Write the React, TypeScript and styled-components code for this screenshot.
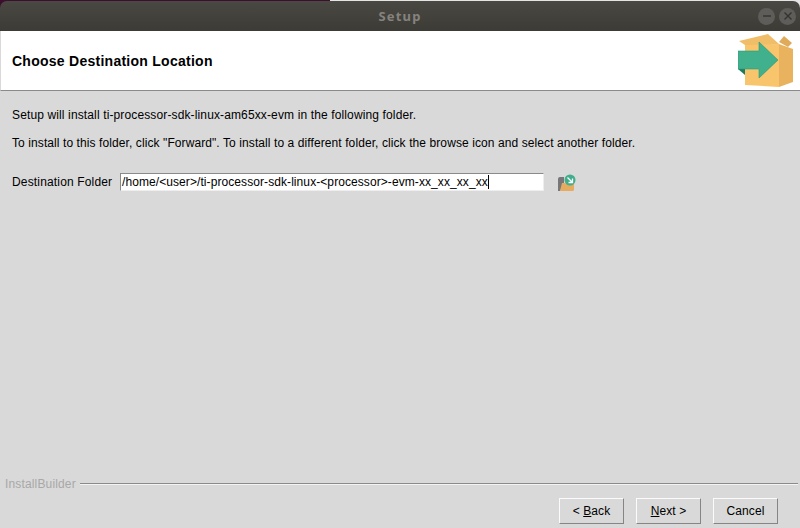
import React from 'react';
import styled, { createGlobalStyle } from 'styled-components';

const GlobalStyle = createGlobalStyle`
  html, body {
    margin: 0;
    padding: 0;
    width: 800px;
    height: 528px;
    overflow: hidden;
    background: #d9d9d9;
  }
  * {
    box-sizing: border-box;
  }
`;

const Page = styled.div`
  width: 800px;
  height: 528px;
  display: flex;
  flex-direction: column;
  font-family: 'Liberation Sans', Arial, sans-serif;
  font-size: 12px;
  color: #000;
  background: linear-gradient(to right, #3c0f2e 0, #3c0f2e 330px, #e4e4e4 330px) top / 100% 8px no-repeat;
`;

const TitleBar = styled.div`
  height: 30px;
  margin-top: 1px;
  flex: none;
  display: flex;
  align-items: center;
  justify-content: flex-end;
  gap: 4px;
  padding-right: 4px;
  position: relative;
  background: linear-gradient(#4a4843, #3d3b36);
  border-radius: 7px 7px 0 0;
`;

const WindowTitle = styled.div`
  position: absolute;
  left: 0;
  right: 0;
  top: 7px;
  text-align: center;
  font-family: 'Noto Sans', 'DejaVu Sans', sans-serif;
  font-weight: 700;
  font-size: 13px;
  line-height: 17px;
  letter-spacing: 1.2px;
  color: #85837f;
`;

const WindowButton = styled.div`
  width: 17px;
  height: 17px;
  border-radius: 50%;
  background: #5f5d59;
  display: flex;
  align-items: center;
  justify-content: center;
`;

const Header = styled.div`
  height: 60px;
  flex: none;
  background: #fff;
  border-bottom: 1px solid #8a8a8a;
  border-left: 1px solid #d9d9d9;
  display: flex;
  align-items: center;
  justify-content: space-between;
  padding: 0 6px 0 11px;
`;

const HeaderTitle = styled.div`
  font-weight: 700;
  font-size: 14px;
  letter-spacing: 0.26px;
`;

const Body = styled.div`
  flex: 1;
  background: #d9d9d9;
  display: flex;
  flex-direction: column;
  padding: 17px 12px 0;
`;

const Paragraph = styled.div<{ $track: number }>`
  line-height: 14px;
  margin-bottom: 14px;
  letter-spacing: ${(p) => p.$track}px;
`;

const FolderRow = styled.div`
  display: flex;
  align-items: center;
  margin-top: 9px;
  height: 18px;
`;

const FolderLabel = styled.div`
  width: 108px;
  flex: none;
  letter-spacing: 0.16px;
`;

const FolderField = styled.div`
  width: 424px;
  height: 18px;
  flex: none;
  background: #fff;
  border-top: 1px solid #8a8a8a;
  border-left: 1px solid #8a8a8a;
  border-right: 1px solid #eeeeee;
  border-bottom: 1px solid #eeeeee;
  padding-left: 1px;
  line-height: 16px;
  letter-spacing: 0.08px;
  white-space: nowrap;
  display: flex;
  align-items: center;
`;

const Caret = styled.span`
  display: inline-block;
  width: 1px;
  height: 14px;
  background: #000;
`;

const BrowseIcon = styled.svg`
  margin-left: 14px;
  flex: none;
`;

const Spacer = styled.div`
  flex: 1;
`;

const BrandRow = styled.div`
  display: flex;
  align-items: center;
  gap: 4px;
  margin: 0 -10px 0 -12px;
  padding-left: 5px;
  height: 14px;
`;

const Brand = styled.span`
  color: #a8a8a8;
  letter-spacing: 0.15px;
`;

const BrandRule = styled.div`
  flex: 1;
  height: 2px;
  border-top: 1px solid #8a8a8a;
  border-bottom: 1px solid #f4f4f4;
`;

const ButtonRow = styled.div`
  display: flex;
  justify-content: flex-end;
  gap: 12px;
  margin: 7px 10px 0 0;
  padding-bottom: 4px;
`;

const Button = styled.div<{ $width: number }>`
  width: ${(p) => p.$width}px;
  height: 26px;
  background: #d9d9d9;
  border-top: 1px solid #fbfbfb;
  border-left: 1px solid #fbfbfb;
  border-right: 1px solid #858585;
  border-bottom: 1px solid #858585;
  display: flex;
  align-items: center;
  justify-content: center;
  white-space: pre;
  letter-spacing: 0.1px;

  u {
    text-underline-offset: 1px;
  }
`;

export default function App() {
  return (
    <Page>
      <GlobalStyle />
      <TitleBar>
        <WindowTitle>Setup</WindowTitle>
        <WindowButton>
          <svg width="10" height="10" viewBox="0 0 10 10">
            <path d="M1 5h8" stroke="#35332f" strokeWidth="1.4" />
          </svg>
        </WindowButton>
        <WindowButton>
          <svg width="10" height="10" viewBox="0 0 10 10">
            <path d="M1.5 1.5l7 7M8.5 1.5l-7 7" stroke="#35332f" strokeWidth="1.4" />
          </svg>
        </WindowButton>
      </TitleBar>
      <Header>
        <HeaderTitle>Choose Destination Location</HeaderTitle>
        <svg width="56" height="55" viewBox="0 0 56 55">
          <path d="M1 8L30 1l11 10-31 3z" fill="#f0bd68" />
          <path d="M7 12l34-1v43L7 52z" fill="#f8c56d" />
          <path d="M41 11l14 5v33l-14 5z" fill="#e8b25f" />
          <path d="M41 9l5-6 8 7-4 4z" fill="#dfab5b" />
          <path d="M0 36h7v6z" fill="#1f7a5e" />
          <path d="M0 18h21V9l19 18-19 18v-9H0z" fill="#41b08c" stroke="#2b9a78" strokeWidth="0.6" />
        </svg>
      </Header>
      <Body>
        <Paragraph $track={0.13}>Setup will install ti-processor-sdk-linux-am65xx-evm in the following folder.</Paragraph>
        <Paragraph $track={0.09}>To install to this folder, click "Forward". To install to a different folder, click the browse icon and select another folder.</Paragraph>
        <FolderRow>
          <FolderLabel>Destination Folder</FolderLabel>
          <FolderField>
            /home/&lt;user&gt;/ti-processor-sdk-linux-&lt;processor&gt;-evm-xx_xx_xx_xx
            <Caret />
          </FolderField>
          <BrowseIcon width="18" height="18" viewBox="0 0 18 18">
            <path d="M0 6q0-2 2-2h4v6L2 18H0z" fill="#77777a" />
            <path d="M2 18l2-8h3l2 1h7v6l-1 1z" fill="#e6ab5e" />
            <circle cx="12" cy="7" r="5.5" fill="#3fae8b" />
            <path d="M9.5 4.5l4.5 4.5M14.5 5.5v4h-4" stroke="#fff" strokeWidth="1.3" fill="none" />
          </BrowseIcon>
        </FolderRow>
        <Spacer />
        <BrandRow>
          <Brand>InstallBuilder</Brand>
          <BrandRule />
        </BrandRow>
        <ButtonRow>
          <Button $width={65}>&lt; <u>B</u>ack</Button>
          <Button $width={65}><u>N</u>ext &gt;</Button>
          <Button $width={65}>Cancel</Button>
        </ButtonRow>
      </Body>
    </Page>
  );
}
